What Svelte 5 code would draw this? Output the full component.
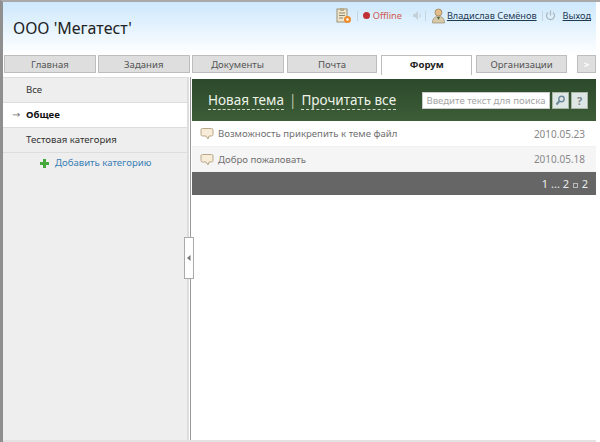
<script>
	const tabs = [
		{ label: 'Главная', w: 92 },
		{ label: 'Задания', w: 92 },
		{ label: 'Документы', w: 92 },
		{ label: 'Почта', w: 91 },
		{ label: 'Форум', w: 91, active: true },
		{ label: 'Организации', w: 91 }
	];
	const topics = [
		{ title: 'Возможность прикрепить к теме файл', date: '2010.05.23' },
		{ title: 'Добро пожаловать', date: '2010.05.18' }
	];
</script>

{#snippet bubble()}
	<svg class="bubble" width="14" height="13" viewBox="0 0 14 13">
		<path d="M2.5 1.5h9a1.5 1.5 0 0 1 1.5 1.5v4.5a1.5 1.5 0 0 1-1.5 1.5H9l-1 3-2-3H2.5A1.5 1.5 0 0 1 1 7.500V3a1.500 1.500 0 0 1 1.500-1.500z" fill="#f6ecd8" stroke="#b9a888" />
	</svg>
{/snippet}

<div class="page">
	<header class="top">
		<h1>ООО 'Мегатест'</h1>
		<nav class="tools">
			<svg class="ico" width="17" height="17" viewBox="0 0 17 17">
				<rect x="2" y="2" width="10" height="13" fill="#efe6cc" stroke="#9b9274" />
				<rect x="5" y="1" width="4" height="3" fill="#b7ad8c" />
				<path d="M4 6h6M4 8.500h6M4 11h4" stroke="#8b8670" />
				<circle cx="12.500" cy="12.500" r="3.500" fill="#ee8b2c" />
				<circle cx="12.500" cy="12.500" r="1.200" fill="#fff" />
			</svg>
			<i class="sep"></i>
			<span class="offline"><b class="dot"></b>Offline</span>
			<svg class="ico speaker" width="11" height="11" viewBox="0 0 11 11">
				<path d="M1 4h2l3-3v9L3 7H1z" fill="#c4d0d8" />
				<path d="M8 3.500v4" stroke="#c4d0d8" />
			</svg>
			<i class="sep"></i>
			<svg class="ico" width="15" height="16" viewBox="0 0 15 16">
				<circle cx="7.500" cy="4.500" r="3.500" fill="#e3bd8c" stroke="#8a6a3e" stroke-width="0.600" />
				<path d="M1.500 15c0-5 2.500-6.500 6-6.500s6 1.500 6 6.500z" fill="#d8c9a8" stroke="#8c7e60" stroke-width="0.600" />
				<path d="M6 9l1.500 3L9 9z" fill="#4e6a3c" />
			</svg>
			<a class="user" href="#user">Владислав Семёнов</a>
			<i class="sep"></i>
			<svg class="ico power" width="11" height="11" viewBox="0 0 11 11" fill="none" stroke="#aab4ba" stroke-width="1.200">
				<path d="M3 2.500a4 4 0 1 0 5 0M5.500 .500v5" />
			</svg>
			<a class="exit" href="#exit">Выход</a>
		</nav>
	</header>

	<div class="tabs">
		{#each tabs as tab}
			<div class="tab" class:active={tab.active} style:width="{tab.w}px">{tab.label}</div>
		{/each}
		<div class="tab more">&gt;</div>
	</div>

	<div class="body">
		<aside class="side">
			<div class="cat">Все</div>
			<div class="cat current"><span class="arrow">→</span>Общее</div>
			<div class="cat">Тестовая категория</div>
			<div class="cat add">
				<svg width="9" height="9" viewBox="0 0 9 9">
					<path d="M3 0h3v3h3v3H6v3H3V6H0V3h3z" fill="#45a83a" />
				</svg>
				<a href="#add">Добавить категорию</a>
			</div>
		</aside>

		<main class="forum">
			<div class="bar">
				<div class="links">
					<a href="#new">Новая тема</a>
					<span class="pipe">|</span>
					<a href="#read">Прочитать все</a>
				</div>
				<div class="search">
					<div class="field">Введите текст для поиска</div>
					<button aria-label="Поиск">
						<svg width="11" height="11" viewBox="0 0 11 11" fill="none" stroke="#6d8a9c" stroke-width="1.400">
							<circle cx="6.500" cy="4" r="2.700" />
							<path d="M4.500 6L1.500 9.500" stroke-width="2" />
						</svg>
					</button>
					<button class="help">?</button>
				</div>
			</div>
			{#each topics as topic, i}
				<div class="topic" class:odd={i % 2 === 1}>
					{@render bubble()}
					<span class="name">{topic.title}</span>
					<span class="date">{topic.date}</span>
				</div>
			{/each}
			<div class="pager">1 ... 2 <span class="box"></span> 2</div>
		</main>

		<div class="handle">
			<svg width="4" height="6" viewBox="0 0 4 6"><path d="M3.500 0v6L0 3z" fill="#777" /></svg>
		</div>
	</div>
</div>

<style>
	:global(body) {
		margin: 0;
		background: #fff;
	}

	.page {
		width: 600px;
		height: 442px;
		box-sizing: border-box;
		overflow: hidden;
		display: flex;
		flex-direction: column;
		padding-right: 4px;
		font-family: 'Noto Sans', 'Liberation Sans', sans-serif;
		font-size: 9.6px;
		color: #444;
		background: #fff;
		border-top: 2px solid #a9a9a9;
		border-left: 3px solid #8f8f8f;
	}

	.top {
		height: 53px;
		flex: none;
		display: flex;
		justify-content: space-between;
		align-items: flex-start;
		background: linear-gradient(#cde8fc, #fff);
	}

	h1 {
		margin: 16px 0 0 10px;
		font-size: 16px;
		font-weight: 400;
		line-height: 20px;
		color: #222;
	}

	.tools {
		display: flex;
		align-items: center;
		gap: 5px;
		margin: 5px 5px 0 0;
		height: 17px;
		font-size: 9.2px;
	}

	.ico {
		flex: none;
	}

	.speaker {
		margin-right: -3px;
	}

	.power {
		margin-left: -3px;
	}

	.sep {
		width: 1px;
		height: 10px;
		background: #c6d4de;
	}

	.offline {
		display: flex;
		align-items: center;
		gap: 3px;
		color: #d4574f;
		margin-right: 5px;
	}

	.dot {
		width: 7px;
		height: 7px;
		border-radius: 50%;
		background: #c03035;
	}

	.tools a {
		color: #1d3a55;
	}

	.user {
		margin-left: -4px;
	}

	.exit {
		margin-left: 2px;
	}

	.tabs {
		height: 20px;
		flex: none;
		display: flex;
		gap: 2px;
		padding-left: 1px;
		box-sizing: border-box;
		align-items: flex-start;
	}

	.tab {
		height: 18px;
		box-sizing: border-box;
		border: 1px solid #bdbdbd;
		background: #dedede;
		text-align: center;
		line-height: 17px;
		color: #555;
	}

	.tab:nth-child(n + 4) {
		margin-left: 1px;
	}

	.tab:nth-child(n + 5) {
		margin-left: 2px;
	}

	.tab.active {
		height: 20px;
		background: #fff;
		border-bottom: 0;
		color: #222;
		font-weight: 700;
	}

	.tab.more {
		width: 19px;
		margin-left: 8px;
		color: #fff;
		font-weight: 700;
	}

	.body {
		position: relative;
		flex: 1;
		display: flex;
		margin-top: 2px;
		border-bottom: 2px solid #e2e2e2;
	}

	.side {
		width: 184px;
		flex: none;
		background: #eee;
		border-top: 1px solid #ddd;
		border-right: 2px solid #ddd;
		box-sizing: content-box;
	}

	.cat {
		height: 24px;
		line-height: 24px;
		padding-left: 23px;
		border-bottom: 1px solid #ddd;
		color: #333;
		position: relative;
	}

	.current {
		background: #fff;
		color: #111;
		font-weight: 700;
	}

	.arrow {
		position: absolute;
		left: 9px;
		font-family: 'DejaVu Sans', sans-serif;
		font-weight: 400;
		color: #777;
	}

	.add {
		height: 20px;
		line-height: 20px;
		border: 0;
		display: flex;
		align-items: center;
		gap: 6px;
		padding-left: 37px;
	}

	.add a {
		color: #3a7fb5;
		text-decoration: none;
	}

	.forum {
		flex: 1;
		border-left: 1px solid #999;
		margin-left: 1px;
		padding: 2px 0 0 1px;
	}

	.bar {
		height: 42px;
		box-sizing: border-box;
		padding: 0 8px 0 16px;
		display: flex;
		justify-content: space-between;
		align-items: center;
		background: linear-gradient(#2c4a2b, #3d5c37);
	}

	.links {
		font-size: 13.5px;
		color: #dfe8d8;
		display: flex;
		gap: 5px;
		margin-top: 2px;
	}

	.links a {
		color: #eef3ea;
		text-decoration: none;
		border-bottom: 1px dashed #cfd9c8;
		line-height: 17px;
	}

	.pipe {
		color: #b8c8ae;
		line-height: 17px;
	}

	.search {
		display: flex;
		gap: 2px;
		align-items: center;
	}

	.field {
		width: 128px;
		height: 17px;
		box-sizing: border-box;
		background: #fff;
		border: 1px solid #ccc;
		color: #a5a5a5;
		line-height: 15px;
		text-align: center;
		white-space: nowrap;
		overflow: hidden;
	}

	button {
		width: 17px;
		height: 17px;
		padding: 0;
		border: 1px solid #a9b6a4;
		background: #dfe6e6;
		display: flex;
		align-items: center;
		justify-content: center;
	}

	.help {
		font: 700 11px 'Noto Sans', sans-serif;
		color: #7d888c;
	}

	.topic {
		height: 26px;
		display: flex;
		align-items: center;
		gap: 4px;
		padding: 0 11px 0 8px;
		color: #707070;
		border-bottom: 1px solid #f0f0f0;
		box-sizing: border-box;
	}

	.topic.odd {
		height: 25px;
		background: #f5f5f5;
	}

	.date {
		margin-left: auto;
		font-size: 10px;
		color: #888;
	}

	.pager {
		height: 23px;
		line-height: 23px;
		padding-right: 8px;
		text-align: right;
		background: #666;
		color: #eee;
		font-size: 11px;
	}

	.box {
		display: inline-block;
		width: 5px;
		height: 5px;
		margin: 0 1px;
		border: 1px solid #bbb;
		box-sizing: border-box;
	}

	.handle {
		position: absolute;
		left: 181px;
		top: 160px;
		width: 10px;
		height: 42px;
		box-sizing: border-box;
		border: 1px solid #aaa;
		background: #fff;
		display: flex;
		align-items: center;
		justify-content: center;
	}
</style>
